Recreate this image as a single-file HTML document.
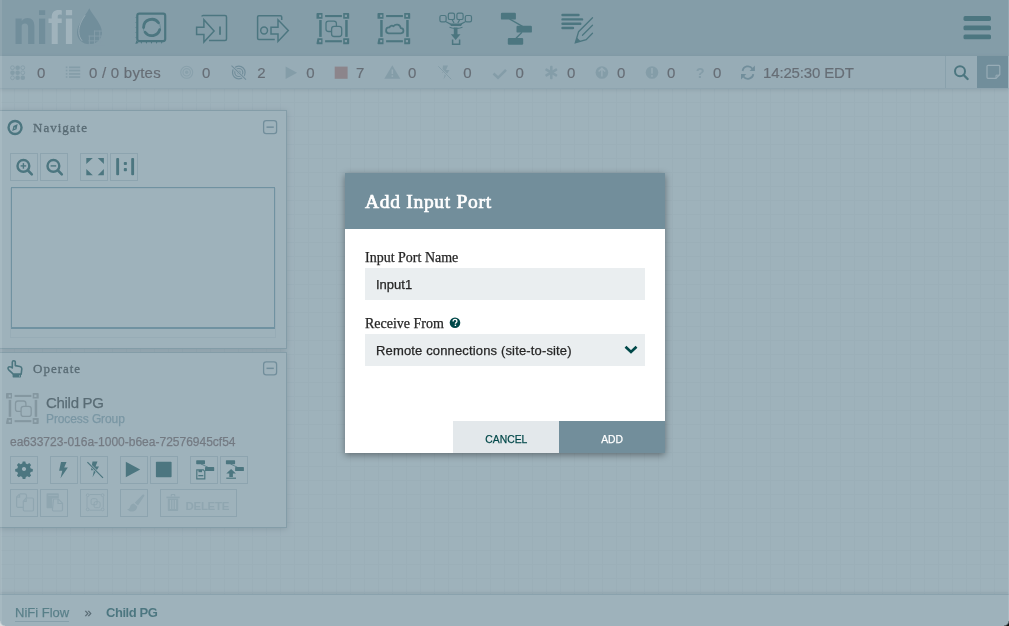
<!DOCTYPE html>
<html><head><meta charset="utf-8">
<style>
*{box-sizing:border-box;margin:0;padding:0}
html,body{width:1009px;height:626px;overflow:hidden;background:#f9fafb;font-family:"Liberation Sans",sans-serif}
.abs{position:absolute}
body *{-webkit-text-stroke-width:0.25px}
#header,#status,.panel,#bread,#dialog,#glass{will-change:transform}
#canvas{position:absolute;left:0;top:0;width:1009px;height:626px;background-color:#f9fafb;
 background-image:linear-gradient(to right,#eef1f3 1px,transparent 1px),linear-gradient(to bottom,#eef1f3 1px,transparent 1px);
 background-size:14px 14px;background-position:0 4px}
#header{position:absolute;left:0;top:0;width:1009px;height:56px;background:#aabbc3}
#status{position:absolute;left:0;top:56px;width:1009px;height:33px;background:#e3e8eb;border-bottom:1px solid #c7d2d7;box-shadow:0 1px 4px rgba(0,0,0,0.2)}
.st{position:absolute;top:8px;font-size:15px;color:#4f2c2a;-webkit-text-stroke:0.2px #4f2c2a;line-height:17px;white-space:nowrap}
.sicon{position:absolute}
.panel{position:absolute;left:0;width:287px;background:#f9fafb;border:1px solid #aabbc3;border-left:none;box-shadow:0 1px 6px rgba(0,0,0,0.25)}
.ptitle{position:absolute;left:33px;font-family:"Liberation Serif",serif;font-size:13px;letter-spacing:1px;color:#262626;-webkit-text-stroke:0.35px #262626}
.btn{position:absolute;width:28px;height:28px;border:1px solid #c4d1d6}
#bread{position:absolute;left:0;top:594px;width:1009px;height:32px;background:#f9fafb;border-top:1px solid #bccbd1;box-shadow:0 -1px 4px rgba(0,0,0,0.18)}
#glass{position:absolute;left:0;top:0;width:1009px;height:626px;background:rgba(114,142,155,0.67)}
#dialog{position:absolute;left:345px;top:173px;width:320px;height:280px;background:#fff;box-shadow:0 2px 7px rgba(0,0,0,0.4)}
#dhead{position:absolute;left:0;top:0;width:320px;height:56px;background:#728e9b}
#dtitle{position:absolute;left:20px;top:18px;font-family:"Liberation Serif",serif;font-weight:normal;-webkit-text-stroke:0.7px #fff;letter-spacing:0.7px;font-size:19.5px;color:#fff;white-space:nowrap}
.lbl{position:absolute;left:20px;font-family:"Liberation Serif",serif;font-size:14px;color:#262626;white-space:nowrap}
.inp{position:absolute;left:20px;width:280px;height:32px;background:#eaeef0;font-size:13px;color:#262626;padding-left:11px;line-height:34px;white-space:nowrap}
.dbtn{position:absolute;top:248px;width:106px;height:32px;font-size:11.5px;font-weight:normal;-webkit-text-stroke:0.45px currentColor;text-align:center;line-height:32px}
.dbtn span{display:inline-block;position:relative;top:2px;transform:scaleX(0.9)}
</style></head><body>
<div id="canvas"></div>

<!-- HEADER -->
<div id="header">
 <svg class="abs" style="left:0;top:0" width="120" height="56" viewBox="0 0 120 56">
  <g fill="#728e9b">
   <path d="M15.5 44V18.5h6.2v2.6c1.4-2 3.4-3.1 5.8-3.1 4.4 0 6.9 2.7 6.9 8V44h-6.3V27c0-2.4-1-3.6-3.2-3.6-1.6 0-2.7 0.8-3.2 2V44z"/>
   <rect x="39" y="10.2" width="6.2" height="4.8"/>
   <rect x="39" y="18.6" width="6.2" height="25.4"/>
  </g>
  <g fill="#ffffff">
   <path d="M51.7 44V23h-3.2v-4.4h3.2v-1.6c0-4.6 2.6-7 7-7 1.1 0 2.2 0.2 3.2 0.4l-0.3 4.5c-0.6-0.2-1.3-0.3-2-0.3-1.3 0-1.9 0.7-1.9 2.3v1.7h4v4.4h-4V44z"/>
   <rect x="65.9" y="10" width="6.2" height="5.2"/>
   <rect x="65.9" y="18.6" width="6.2" height="25.4"/>
  </g>
  <path fill="#728e9b" d="M89.3 8.2C86 15 77 24 77 32.5c0 6.8 5.6 11.8 12.5 11.8s12.5-5 12.5-11.8C102 24 92.6 15 89.3 8.2z"/>
  <path fill="none" stroke="#ffffff" stroke-width="0.9" opacity="0.8" d="M85.2 15.2C81.5 20.5 78.8 26 78.8 31.5c0 3.8 1.3 7 3.3 9.3"/>
  <g fill="#aabbc3"><rect x="94" y="30.6" width="10" height="0.9"/><rect x="88.5" y="35.6" width="15.5" height="0.9"/><rect x="88.5" y="40.4" width="15.5" height="0.9"/><rect x="94.1" y="30.6" width="0.9" height="15"/><rect x="99.3" y="30.6" width="0.9" height="15"/><rect x="88.9" y="35.6" width="0.9" height="10"/><rect x="102.6" y="30" width="2" height="15"/><rect x="88.5" y="43.9" width="16" height="2"/></g>
 </svg>
 <!-- processor -->
 <svg class="abs" style="left:130px;top:8px" width="42" height="42" viewBox="0 0 42 42">
  <rect x="7.3" y="5.7" width="27.9" height="27.4" rx="2" fill="none" stroke="#004849" stroke-width="2.2"/>
  <g fill="#004849"><path d="M10.600000000000001 34.1h1.4l-0.7 1.9z"/><path d="M15.7 34.1h1.4l-0.7 1.9z"/><path d="M20.8 34.1h1.4l-0.7 1.9z"/><path d="M25.900000000000002 34.1h1.4l-0.7 1.9z"/><path d="M31.0 34.1h1.4l-0.7 1.9z"/><path d="M6.3 8.8v1.4l-0.9-0.7z"/><path d="M6.3 13.8v1.4l-0.9-0.7z"/><path d="M6.3 18.8v1.4l-0.9-0.7z"/><path d="M6.3 23.8v1.4l-0.9-0.7z"/><path d="M6.3 28.8v1.4l-0.9-0.7z"/><path d="M6.3 32.5l-0.9 3.5 3.3-1z"/></g>
  <circle cx="21.8" cy="19.5" r="8.6" fill="none" stroke="#004849" stroke-width="1" opacity="0.5"/>
  <path d="M13.6 19.5A8.2 8.2 0 0 1 28.5 14.8" fill="none" stroke="#004849" stroke-width="2.8" stroke-linecap="round"/>
  <path d="M15.1 24.2A8.2 8.2 0 0 0 29.7 21.6" fill="none" stroke="#004849" stroke-width="2.8" stroke-linecap="round"/>
 </svg>
 <!-- input port -->
 <svg class="abs" style="left:190px;top:8px" width="42" height="42" viewBox="0 0 42 42">
  <g fill="none" stroke="#004849" stroke-width="1.5">
   <path d="M12 8.5c0-0.6 0.5-1.1 1.1-1.1H35c0.8 0 1.5 0.7 1.5 1.5V31c0 0.8-0.7 1.5-1.5 1.5H19"/>
   <path d="M6.6 19.2h7.3v-7.5l10.2 11.2-10.2 11.2v-7.5H6.6z"/>
  </g>
  <rect x="29.1" y="18.5" width="1.8" height="8.3" fill="#004849"/>
 </svg>
 <!-- output port -->
 <svg class="abs" style="left:251px;top:8px" width="42" height="42" viewBox="0 0 42 42">
  <g fill="none" stroke="#004849" stroke-width="1.5">
   <path d="M23.8 31.5H7.8c-0.7 0-1.2-0.5-1.2-1.2V9c0-0.8 0.6-1.3 1.3-1.3h21.5c0.8 0 1.3 0.6 1.3 1.3v3"/>
   <circle cx="13.1" cy="22.5" r="3.4"/>
   <path d="M20 19.3h7v-7.5l10.3 10.8-10.3 10.8v-7.5h-7z"/>
  </g>
 </svg>
 <!-- process group -->
 <svg class="abs" style="left:312px;top:8px" width="42" height="42" viewBox="0 0 42 42" id="pgicon">
  <g fill="#004849">
   <path d="M5.5 5h5v5.7h-6v-4.7c0-0.6 0.4-1 1-1zM7.2 6.8v2.2h2v-2.2z"/>
   <path d="M31.2 5h5c0.6 0 1 0.4 1 1v4.7h-6zM32.8 6.8v2.2h2.2v-2.2z"/>
   <path d="M5.5 30.2h5v6h-5c-0.6 0-1-0.4-1-1zM7.2 32v2.3h2v-2.3z"/>
   <path d="M31.2 30.2h6v5c0 0.6-0.4 1-1 1h-5zM32.8 32v2.3h2.2v-2.3z"/>
   <rect x="13.1" y="7" width="16.8" height="2.1"/>
   <rect x="13.1" y="32.2" width="16.8" height="2.1"/>
   <rect x="7.2" y="12" width="2.5" height="16.9"/>
   <rect x="33.2" y="12" width="2.5" height="16.9"/>
  </g>
  <g fill="none" stroke="#004849" stroke-width="1.3">
   <path d="M19.5 23.5h-3c-1.4 0-2.5-1.1-2.5-2.5v-5.4c0-1.4 1.1-2.5 2.5-2.5h5.4c1.4 0 2.5 1.1 2.5 2.5v2.7"/>
   <rect x="19.6" y="18.4" width="10.1" height="10.1" rx="2.5"/>
  </g>
 </svg>
 <!-- remote process group -->
 <svg class="abs" style="left:373px;top:8px" width="42" height="42" viewBox="0 0 42 42">
  <g fill="#004849">
   <path d="M5.5 5h5v5.7h-6v-4.7c0-0.6 0.4-1 1-1zM7.2 6.8v2.2h2v-2.2z"/>
   <path d="M31.2 5h5c0.6 0 1 0.4 1 1v4.7h-6zM32.8 6.8v2.2h2.2v-2.2z"/>
   <path d="M5.5 30.2h5v6h-5c-0.6 0-1-0.4-1-1zM7.2 32v2.3h2v-2.3z"/>
   <path d="M31.2 30.2h6v5c0 0.6-0.4 1-1 1h-5zM32.8 32v2.3h2.2v-2.3z"/>
   <rect x="13.1" y="7" width="16.8" height="2.1"/>
   <rect x="13.1" y="32.2" width="16.8" height="2.1"/>
   <rect x="7.2" y="12" width="2.5" height="16.9"/>
   <rect x="33.2" y="12" width="2.5" height="16.9"/>
  </g>
  <path fill="none" stroke="#004849" stroke-width="1.7" stroke-linejoin="round" d="M15.6 25.3H28A2.6 2.6 0 0 0 27.7 20.1A3.9 3.9 0 0 0 20.5 18.4A2.5 2.5 0 0 0 16.4 19.5A2.9 2.9 0 0 0 15.6 25.3Z"/>
 </svg>
 <!-- funnel -->
 <svg class="abs" style="left:434px;top:8px" width="42" height="42" viewBox="0 0 42 42">
  <g fill="none" stroke="#004849" stroke-width="1.2">
   <rect x="5.9" y="7.5" width="6.2" height="6.3" rx="1.6"/>
   <rect x="14.3" y="5.2" width="6.2" height="6.3" rx="1.6"/>
   <rect x="22.9" y="5.2" width="6.2" height="6.3" rx="1.6"/>
   <rect x="31.3" y="7.5" width="6.2" height="6.3" rx="1.6"/>
   <path d="M12 13.8l4.5 2.3M18 11.5l2 3.5M25.8 11.5l-2 3.5M31.3 13.8l-4.5 2.3"/>
   <path d="M18.6 31.6v4.6h7v-4.6" stroke-width="1.5"/>
   <path d="M15.5 19.3c4 1.6 9 1.6 13 0" stroke-width="1"/>
  </g>
  <g fill="#004849">
   <path d="M15.5 15.4h13l-1.5 2.7h-10z"/>
   <rect x="19.8" y="19.5" width="3.7" height="8"/>
   <path d="M16.8 26.2h9.7l-4.85 5.7z"/>
  </g>
 </svg>
 <!-- template -->
 <svg class="abs" style="left:495px;top:8px" width="42" height="42" viewBox="0 0 42 42">
  <g fill="#004849">
   <rect x="5.9" y="4.8" width="15" height="6.8" rx="1.2"/>
   <rect x="21.5" y="17.8" width="15.4" height="6.8" rx="1.2"/>
   <rect x="12.8" y="29.9" width="15.4" height="6.9" rx="1.2"/>
  </g>
  <path d="M14.5 11l13 7.3M27 24.2l-6 6" stroke="#004849" stroke-width="1.4"/>
 </svg>
 <!-- label -->
 <svg class="abs" style="left:556px;top:8px" width="42" height="42" viewBox="0 0 42 42">
  <g stroke="#004849" stroke-width="2.4" stroke-linecap="round">
   <path d="M6.5 7h16M6.5 11.4h19.6M6.5 15.8h17.8M6.5 20h10.5"/>
  </g>
  <g fill="none" stroke="#004849" stroke-width="1.3" stroke-linecap="round">
   <path d="M36.5 9.8L22.6 23.7l-3.3 11 10.9-3.1L36.5 25.3"/>
   <path d="M36.5 17.3L26.5 27.3"/>
  </g>
  <path d="M19.3 34.7l1.6-5.2 3.5 3.4z" fill="#004849"/>
 </svg>
 <!-- hamburger -->
 <svg class="abs" style="left:960px;top:12px" width="34" height="32" viewBox="0 0 34 32">
  <g fill="#004849"><rect x="3.5" y="4.1" width="27.5" height="4.8" rx="1.6"/><rect x="3.5" y="13.5" width="27.5" height="4.8" rx="1.6"/><rect x="3.5" y="22.5" width="27.5" height="4.8" rx="1.6"/></g>
 </svg>
</div>

<!-- STATUS BAR -->
<div id="status">
 <svg class="sicon" style="left:0;top:0" width="1009" height="32"><circle cx="12.5" cy="11.7" r="1.9" fill="none" stroke="#aabbc3" stroke-width="0.9"/><circle cx="17.65" cy="11.7" r="2.3" fill="#aabbc3"/><circle cx="22.8" cy="11.7" r="1.9" fill="none" stroke="#aabbc3" stroke-width="0.9"/><circle cx="12.5" cy="16.75" r="2.3" fill="#aabbc3"/><circle cx="17.65" cy="16.75" r="2.3" fill="#aabbc3"/><circle cx="22.8" cy="16.75" r="1.9" fill="none" stroke="#aabbc3" stroke-width="0.9"/><circle cx="12.5" cy="21.799999999999997" r="1.9" fill="none" stroke="#aabbc3" stroke-width="0.9"/><circle cx="17.65" cy="21.799999999999997" r="2.3" fill="#aabbc3"/><circle cx="22.8" cy="21.799999999999997" r="2.3" fill="#aabbc3"/><rect x="65.8" y="10.5" width="1.6" height="1.6" fill="#aabbc3"/><rect x="69" y="10.5" width="11.2" height="1.7" fill="#aabbc3"/><rect x="65.8" y="13.7" width="1.6" height="1.6" fill="#aabbc3"/><rect x="69" y="13.7" width="11.2" height="1.7" fill="#aabbc3"/><rect x="65.8" y="17.099999999999998" width="1.6" height="1.6" fill="#aabbc3"/><rect x="69" y="17.099999999999998" width="11.2" height="1.7" fill="#aabbc3"/><rect x="65.8" y="20.2" width="1.6" height="1.6" fill="#aabbc3"/><rect x="69" y="20.2" width="11.2" height="1.7" fill="#aabbc3"/><g fill="none" stroke="#b8c7cd" stroke-width="1.1"><circle cx="186.7" cy="16.3" r="6"/><circle cx="186.7" cy="16.3" r="3.7"/></g><circle cx="186.7" cy="16.3" r="1.7" fill="#b8c7cd"/><g fill="none" stroke="#728e9b" stroke-width="1.2"><circle cx="238.8" cy="16.5" r="6.3"/><circle cx="238.8" cy="16.5" r="4"/></g><circle cx="238.8" cy="16.5" r="2" fill="#728e9b"/><path d="M231.5 9.8l14.5 14" stroke="#e3e8eb" stroke-width="2.6"/><path d="M231.5 9.6l14.5 14" stroke="#728e9b" stroke-width="1.1"/><path d="M285.6 10.6L297.1 16.8L285.6 23.1z" fill="#aabbc3"/><rect x="334.7" y="10.6" width="12.9" height="12.2" fill="#c2746b"/><path d="M392.3 9.2L400.3 22.8H384.3z" fill="#aabbc3"/><rect x="391.6" y="13.5" width="1.5" height="4.5" fill="#e3e8eb"/><rect x="391.6" y="19.3" width="1.5" height="1.6" fill="#e3e8eb"/><path d="M443 9.5h5l-2 4.5h3.5l-6 9.5 1.5-6.5h-3z" fill="#aabbc3"/><path d="M438.3 10.5l13 13" stroke="#e3e8eb" stroke-width="2.4"/><path d="M438.3 10.3l13 13" stroke="#aabbc3" stroke-width="1"/><path d="M493.5 17.5l4.5 4.3 8-8" fill="none" stroke="#aabbc3" stroke-width="2.6"/><rect x="550" y="9.8" width="2.6" height="13.4" rx="1" fill="#aabbc3" transform="rotate(0 551.3 16.5)"/><rect x="550" y="9.8" width="2.6" height="13.4" rx="1" fill="#aabbc3" transform="rotate(60 551.3 16.5)"/><rect x="550" y="9.8" width="2.6" height="13.4" rx="1" fill="#aabbc3" transform="rotate(120 551.3 16.5)"/><circle cx="601.9" cy="16.5" r="6.3" fill="#aabbc3"/><path d="M601.9 12.3v8.2M598.6 15.5l3.3-3.3 3.3 3.3" fill="none" stroke="#e3e8eb" stroke-width="1.5"/><circle cx="652" cy="16.5" r="6.3" fill="#aabbc3"/><rect x="651.2" y="12" width="1.6" height="5.6" fill="#e3e8eb"/><rect x="651.2" y="19.1" width="1.6" height="1.7" fill="#e3e8eb"/><text x="695.8" y="21.9" font-family="Liberation Sans" font-weight="bold" font-size="14.5" fill="#aabbc3">?</text><g fill="none" stroke="#728e9b" stroke-width="1.8"><path d="M742.6 15a5.4 5.4 0 0 1 9.8-2.3"/><path d="M753.3 18.2a5.4 5.4 0 0 1-9.8 2.3"/></g><path d="M754.9 9.5v5.5h-5.3z" fill="#728e9b"/><path d="M741 23.5v-5.5h5.3z" fill="#728e9b"/><rect x="945" y="0" width="1" height="32" fill="#bac8ce"/><circle cx="960" cy="15.3" r="5" fill="none" stroke="#004849" stroke-width="2"/><path d="M963.6 19l4 4" stroke="#004849" stroke-width="2.4" stroke-linecap="round"/></svg><div class="st" style="left:36.9px">0</div><div class="st" style="left:89px;letter-spacing:0.25px">0 / 0 bytes</div><div class="st" style="left:202px">0</div><div class="st" style="left:257.2px">2</div><div class="st" style="left:306.2px">0</div><div class="st" style="left:356px">7</div><div class="st" style="left:408px">0</div><div class="st" style="left:463.3px">0</div><div class="st" style="left:515.5px">0</div><div class="st" style="left:567px">0</div><div class="st" style="left:617.1px">0</div><div class="st" style="left:667px">0</div><div class="st" style="left:713.1px">0</div><div class="st" style="left:763px;letter-spacing:-0.15px">14:25:30 EDT</div><div class="abs" style="left:977px;top:0;width:31px;height:32px;background:#728e9b"><svg class="abs" style="left:0;top:0" width="32" height="32"><path d="M10.8 9.3h11c0.6 0 1 0.4 1 1v8.2l-3.8 3.8H11c-0.6 0-1-0.4-1-1V10.3c0-0.6 0.4-1 1-1z" fill="none" stroke="#e3e8eb" stroke-width="1.2"/><path d="M19 22.2v-3h3.5" fill="none" stroke="#e3e8eb" stroke-width="1"/></svg></div>
</div>

<!-- NAVIGATE PANEL -->
<div class="panel" style="top:110px;height:239px" id="navpanel">
 <svg class="abs" style="left:0;top:-1px" width="287" height="238">
  <circle cx="15.05" cy="17.5" r="6.5" fill="none" stroke="#004849" stroke-width="2.4"/>
  <path d="M17.6 13.9L16.6 19.2 12.2 21.1 13.4 15.9z" fill="#004849"/>
  <path d="M14.3 17.2l1.4 0.9-1.5 0.8z" fill="#f9fafb"/>
  <rect x="263.6" y="10.6" width="13" height="13" rx="2.6" fill="none" stroke="#728e9b" stroke-width="1.3"/>
  <rect x="266.5" y="16.4" width="7.3" height="1.5" fill="#728e9b"/>
  <g fill="none" stroke="#004849" stroke-width="2.4"><circle cx="23.4" cy="55.9" r="5.9"/><circle cx="53.4" cy="55.9" r="5.9"/></g>
  <g stroke="#004849" stroke-width="2.6" stroke-linecap="round"><path d="M28 60.5l3.8 3.8M58 60.5l3.8 3.8"/></g>
  <g fill="#004849"><rect x="20.6" y="55.2" width="5.6" height="1.4"/><rect x="22.7" y="53.1" width="1.4" height="5.6"/><rect x="50.6" y="55.2" width="5.6" height="1.4"/></g>
  <g fill="#004849"><path d="M86.3 47.9h6.5l-6.5 6.1z"/><path d="M103.9 47.9h-6.2l6.2 6.1z"/><path d="M86.3 65.3h6.5l-6.5-6.3z"/><path d="M103.9 65.3h-6.2l6.2-6.3z"/>
   <rect x="116.2" y="47.9" width="2.9" height="17.4" rx="1"/><rect x="131.2" y="47.9" width="2.9" height="17.4" rx="1"/><rect x="123.8" y="52" width="3.1" height="3" rx="0.8"/><rect x="123.8" y="58.1" width="3.1" height="3.1" rx="0.8"/></g>
 </svg>
 <div class="ptitle" style="top:9px">Navigate</div>
 <div class="btn" style="left:10px;top:42px"></div><div class="btn" style="left:40px;top:42px"></div>
 <div class="btn" style="left:80px;top:42px"></div><div class="btn" style="left:110px;top:42px"></div>
 <div class="abs" style="left:10px;top:77px;width:266px;height:150px;border:1px solid #e3e8eb"></div>
 <div class="abs" style="left:11px;top:76px;width:264px;height:142px;border:1px solid #6f9aae;border-bottom-width:2px"></div>
</div>
<!-- OPERATE PANEL -->
<div class="panel" style="top:352px;height:176px" id="oppanel">
 <svg class="abs" style="left:0;top:-1px" width="287" height="175">
  <path d="M12.3 15.2V10.2a1.5 1.5 0 0 1 3 0V13.6l4.6 0.9c1.2 0.3 1.9 1.1 1.9 2.3l-0.6 5.3H13.3l-4.6-4.3c-1-1-0.9-2.2 0.1-2.8 0.9-0.5 2-0.3 3.5 1z" fill="none" stroke="#004849" stroke-width="1.6" stroke-linejoin="round"/>
  <rect x="12.6" y="22" width="8.4" height="3.4" rx="0.6" fill="#004849"/>
  <rect x="19" y="23.5" width="1" height="1" fill="#f9fafb"/>
  <rect x="263.6" y="9.8" width="13" height="13" rx="2.6" fill="none" stroke="#728e9b" stroke-width="1.3"/>
  <rect x="266.5" y="15.6" width="7.3" height="1.5" fill="#728e9b"/>
  <g transform="translate(1.5,35.9)"><g fill="#aaaaaa">
   <path d="M5.5 5h5v5.7h-6v-4.7c0-0.6 0.4-1 1-1zM7.2 6.8v2.2h2v-2.2z"/>
   <path d="M31.2 5h5c0.6 0 1 0.4 1 1v4.7h-6zM32.8 6.8v2.2h2.2v-2.2z"/>
   <path d="M5.5 30.2h5v6h-5c-0.6 0-1-0.4-1-1zM7.2 32v2.3h2v-2.3z"/>
   <path d="M31.2 30.2h6v5c0 0.6-0.4 1-1 1h-5zM32.8 32v2.3h2.2v-2.3z"/>
   <rect x="13.1" y="7" width="16.8" height="2.1"/>
   <rect x="13.1" y="32.2" width="16.8" height="2.1"/>
   <rect x="7.2" y="12" width="2.5" height="16.9"/>
   <rect x="33.2" y="12" width="2.5" height="16.9"/>
  </g>
  <g fill="none" stroke="#aaaaaa" stroke-width="1.3">
   <path d="M19.5 23.5h-3c-1.4 0-2.5-1.1-2.5-2.5v-5.4c0-1.4 1.1-2.5 2.5-2.5h5.4c1.4 0 2.5 1.1 2.5 2.5v2.7"/>
   <rect x="19.6" y="18.4" width="10.1" height="10.1" rx="2.5"/>
  </g></g>
 </svg>
 <div class="ptitle" style="top:8px">Operate</div>
 <div class="abs" style="left:46px;top:40.5px;font-size:15px;color:#262626;white-space:nowrap;letter-spacing:-0.3px">Child PG</div>
 <div class="abs" style="left:46px;top:59px;font-size:12px;color:#8aa8b4;white-space:nowrap;letter-spacing:-0.1px">Process Group</div>
 <div class="abs" style="left:10px;top:82px;font-size:12px;color:#775351;white-space:nowrap">ea633723-016a-1000-b6ea-72576945cf54</div>
 <div class="btn" style="left:10px;top:103px"></div>
 <div class="btn" style="left:50px;top:103px"></div><div class="btn" style="left:80px;top:103px"></div>
 <div class="btn" style="left:120px;top:103px"></div><div class="btn" style="left:150px;top:103px"></div>
 <div class="btn" style="left:190px;top:103px"></div><div class="btn" style="left:220px;top:103px"></div>
 <div class="btn" style="left:10px;top:136px"></div><div class="btn" style="left:40px;top:136px"></div>
 <div class="btn" style="left:80px;top:136px"></div><div class="btn" style="left:120px;top:136px"></div>
 <div class="btn" style="left:160px;top:136px;width:76.5px"></div>
 <svg class="abs" style="left:0;top:-1px" width="287" height="175">
  <g transform="translate(24,117)" fill="#004849">
   <path d="M-1.3 -7.6h2.6l0.5 2.1 1.6 0.7 1.9-1.1 1.8 1.8-1.1 1.9 0.7 1.6 2.1 0.5v2.6l-2.1 0.5-0.7 1.6 1.1 1.9-1.8 1.8-1.9-1.1-1.6 0.7-0.5 2.1h-2.6l-0.5-2.1-1.6-0.7-1.9 1.1-1.8-1.8 1.1-1.9-0.7-1.6-2.1-0.5v-2.6l2.1-0.5 0.7-1.6-1.1-1.9 1.8-1.8 1.9 1.1 1.6-0.7z M0 -2.1a2.1 2.1 0 1 0 0.01 0z" fill-rule="evenodd"/>
  </g>
  <path d="M61 109.9h5.5l-2.3 5.5h3.7l-7.4 10.9 1.8-7.5h-3.2z" fill="#004849"/>
  <path d="M92.5 109.6h5l-2 5h3.5l-6.5 10.6 1.5-7h-3z" fill="#004849"/>
  <path d="M87.4 110.1l15.6 15.7" stroke="#f9fafb" stroke-width="2.4"/>
  <path d="M87.4 110.1l15.6 15.7" stroke="#004849" stroke-width="1.2"/>
  <path d="M125.8 109.8L140.2 117.55 125.8 125.3z" fill="#004849"/>
  <rect x="155.9" y="109.8" width="15.7" height="15.5" rx="0.8" fill="#004849"/>
  <g fill="#004849"><rect x="196.2" y="108.3" width="8.8" height="3.9" rx="0.6"/><rect x="205" y="115.1" width="9.2" height="3.9" rx="0.6"/>
   <rect x="225.9" y="108.3" width="9.2" height="3.9" rx="0.6"/><rect x="235.1" y="115.1" width="8.8" height="3.9" rx="0.6"/></g>
  <path d="M201 112l7 3.3M230.5 112l7 3.3" stroke="#004849" stroke-width="0.8"/>
  <path d="M196.8 117.9h6.5l1.5 1.5v7.5h-8z" fill="none" stroke="#004849" stroke-width="1.2"/>
  <rect x="198.5" y="118" width="3.5" height="2.2" fill="#004849"/><rect x="198.3" y="123" width="5" height="1.3" fill="#004849"/>
  <path d="M231.1 117l-4.8 4.6h3v3.5h3.6v-3.5h3z" fill="#004849"/><rect x="226.3" y="125.6" width="9.7" height="1.2" fill="#004849"/>
  <g fill="none" stroke="#cbd7db" stroke-width="1.2">
   <path d="M20 141.8h4.8c1 0 1.7 0.8 1.7 1.7v2.5"/><path d="M23.5 155.3h-5.7c-0.7 0-1.2-0.5-1.2-1.2v-9l3-3.2"/><path d="M16.8 145.2h2.8v-3"/>
   <path d="M26 146h6.3c0.7 0 1.2 0.5 1.2 1.2v10.6c0 0.7-0.5 1.2-1.2 1.2h-7.8c-0.7 0-1.2-0.5-1.2-1.2v-8.5z"/><path d="M23.5 149.3h2.7v-3"/>
   <path d="M53.6 147h4.7l4.2 4.2v6.6c0 0.7-0.5 1.2-1.2 1.2h-7.7c-0.7 0-1.2-0.5-1.2-1.2z"/><path d="M58 147v4.5h4.3"/>
  </g>
  <path d="M47.5 141.3h10.3c0.5 0 1 0.4 1 1v4h-5.3c-0.8 0-1.3 0.5-1.3 1.3v8.6h-4.7c-0.5 0-1-0.4-1-1v-12.9c0-0.6 0.4-1 1-1z" fill="#cbd7db"/>
  <rect x="48.3" y="143" width="9.4" height="1" fill="#f9fafb" opacity="0.6"/>
  <g fill="none" stroke="#cbd7db" stroke-width="1">
   <circle cx="87.7" cy="143.2" r="1.4"/><circle cx="102.6" cy="143.2" r="1.4"/><circle cx="87.7" cy="157.4" r="1.4"/><circle cx="102.6" cy="157.4" r="1.4"/>
   <path d="M89.5 142.5h11.3M89.5 158.2h11.3M87 145v10.6M103.3 145v10.6"/>
   <rect x="91.1" y="146.7" width="6" height="6" rx="1.5"/><rect x="94.1" y="149.7" width="6" height="6" rx="1.5"/>
  </g>
  <g transform="translate(-1.8,0.6)"><path d="M144.3 142.2c0.9-0.9 2.3-0.1 1.8 1.1l-6.3 9.6-3.3-2.8z" fill="#cbd7db"/>
  <path d="M135.6 151l3.5 3c-0.2 3-2.5 5-5.3 5-2 0-3.8-1-5-2.6 1.7 0.3 2.6-0.5 3-2 0.5-2 2-3.4 3.8-3.4z" fill="#cbd7db"/></g>
  <g fill="#cbd7db"><rect x="166.4" y="144.6" width="13.3" height="1.6"/><path d="M170.7 144.6v-1.7c0-0.6 0.5-1 1-1h2.6c0.6 0 1 0.4 1 1v1.7h-1.2v-1.5h-2.2v1.5z"/>
   <path d="M167.8 146.6h10.4v11.3c0 0.6-0.4 1-1 1h-8.4c-0.6 0-1-0.4-1-1zM169.9 148v9h1.2v-9zM172.4 148v9h1.2v-9zM174.9 148v9h1.2v-9z" fill-rule="evenodd"/></g>
 </svg>
 <div class="abs" style="left:185.5px;top:147px;font-size:11.5px;font-weight:bold;color:#cbd7db;letter-spacing:-0.3px;white-space:nowrap;-webkit-text-stroke-width:0">DELETE</div>
</div>

<!-- BREADCRUMBS -->
<div id="bread">
 <div class="abs" style="left:15px;top:10px;font-size:13px;color:#004849;opacity:0.85;white-space:nowrap;border-bottom:1px solid #aabbc3;line-height:16px">NiFi Flow</div>
 <div class="abs" style="left:84.5px;top:10px;font-size:13px;color:#262626;line-height:16px">&raquo;</div>
 <div class="abs" style="left:106px;top:10px;font-size:13px;font-weight:bold;color:#004849;white-space:nowrap;letter-spacing:-0.45px;line-height:16px;-webkit-text-stroke-width:0">Child PG</div>
</div>

<div id="glass"></div>
<div class="abs" style="left:0;top:0;width:2px;height:626px;background:rgba(255,255,255,0.09)"></div>
<div class="abs" style="left:1008px;top:0;width:1px;height:626px;background:rgba(255,255,255,0.12)"></div>
<div class="abs" style="left:0;top:621px;width:5px;height:5px;background:radial-gradient(circle at 5px 0,rgba(0,0,0,0) 4px,#d9dcdd 5.5px)"></div>
<div class="abs" style="left:1004px;top:621px;width:5px;height:5px;background:radial-gradient(circle at 0 0,rgba(0,0,0,0) 4px,#111 5.5px)"></div>

<!-- DIALOG -->
<div id="dialog">
 <div id="dhead"><div id="dtitle">Add Input Port</div></div>
 <div class="lbl" style="top:77px">Input Port Name</div>
 <div class="inp" style="top:95px">Input1</div>
 <div class="lbl" style="top:143px">Receive From</div>
 <svg class="abs" style="left:99px;top:139px" width="20" height="20">
  <circle cx="11" cy="10.8" r="5.3" fill="#004849"/>
  <path d="M9.1 9.4c0-1.2 0.9-2 1.9-2s1.9 0.7 1.9 1.8c0 1.3-1.5 1.4-1.5 2.6" fill="none" stroke="#fff" stroke-width="1.3"/>
  <rect x="10.7" y="12.6" width="1.4" height="1.4" fill="#fff"/>
 </svg>
 <div class="inp" style="top:161px;letter-spacing:0.15px">Remote connections (site-to-site)</div>
 <svg class="abs" style="left:275px;top:170px" width="20" height="16">
  <path d="M5.5 3.8l5.5 5.2 5.5-5.2" fill="none" stroke="#004849" stroke-width="2.7"/>
 </svg>
 <div class="dbtn" style="left:108px;background:#e3e8eb;color:#004849"><span>CANCEL</span></div>
 <div class="dbtn" style="left:214px;background:#728e9b;color:#fff"><span>ADD</span></div>
</div>
</body></html>
